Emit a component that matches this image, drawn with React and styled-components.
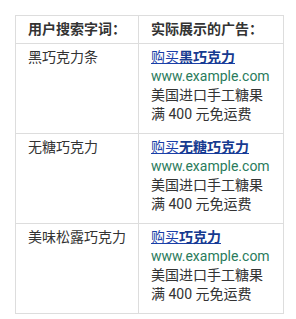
import React from 'react';
import styled, { createGlobalStyle } from 'styled-components';

const rows = [
  { query: '黑巧克力条', keyword: '黑巧克力' },
  { query: '无糖巧克力', keyword: '无糖巧克力' },
  { query: '美味松露巧克力', keyword: '巧克力' },
];

const App = () => (
  <>
    <GlobalStyle />
    <Page>
      <Table>
        <colgroup>
          <Col $w={123} />
          <Col $w={145} />
        </colgroup>
        <thead>
          <tr>
            <Th>用户搜索字词：</Th>
            <Th>实际展示的广告：</Th>
          </tr>
        </thead>
        <tbody>
          {rows.map(row => (
            <tr key={row.query}>
              <Td>{row.query}</Td>
              <Td>
                <AdLink href="#">
                  购买<strong>{row.keyword}</strong>
                </AdLink>
                <AdUrl>www.example.com</AdUrl>
                <div>美国进口手工糖果</div>
                <div>满 400 元免运费</div>
              </Td>
            </tr>
          ))}
        </tbody>
      </Table>
    </Page>
  </>
);

export default App;

const GlobalStyle = createGlobalStyle`
  *, *::before, *::after {
    box-sizing: border-box;
  }
  body {
    margin: 0;
    background: #fff;
    font-family: Roboto, "Noto Sans CJK SC", sans-serif;
    font-size: 14px;
    color: #333;
  }
`;

const Page = styled.div`
  padding: 15px 13px 15px 15px;
`;

const Table = styled.table`
  width: 268px;
  border-collapse: collapse;
  table-layout: fixed;
  line-height: 19px;
`;

const Col = styled.col`
  width: ${props => props.$w}px;
`;

const Th = styled.th`
  padding: 4px 12px;
  text-align: left;
  font-weight: 700;
  color: #333;
  border: 1px solid #ddd;
  white-space: nowrap;
`;

const Td = styled.td`
  padding: 4px 12px 9px;
  vertical-align: top;
  border: 1px solid #ddd;
  color: #333;
  white-space: nowrap;
`;

const AdLink = styled.a`
  display: block;
  color: #1a3fa8;
  text-decoration: underline;

  strong {
    font-weight: 700;
    color: #163a8f;
  }
`;

const AdUrl = styled.div`
  color: #2a7b5c;
`;
